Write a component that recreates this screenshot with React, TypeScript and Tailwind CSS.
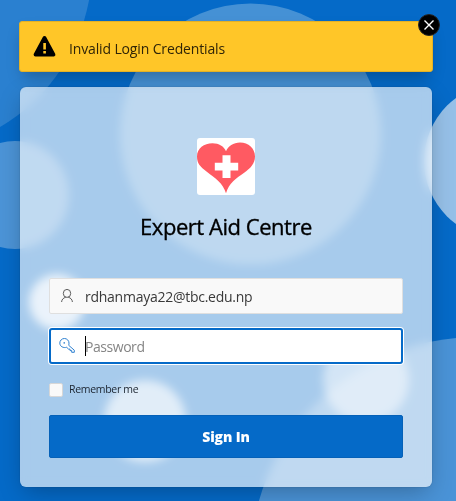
import React from "react";

function Backdrop() {
  return (
    <svg className="absolute inset-0" width="456" height="501" viewBox="0 0 456 501" fill="#fff" aria-hidden="true">
      <circle cx="-95.5" cy="-34.6" r="187.8" fillOpacity="0.15" />
      <circle cx="250.500" cy="134" r="130.500" fill="#f5fdf9" fillOpacity="0.27" />
      <circle cx="15" cy="195" r="54" fillOpacity="0.285" />
      <circle cx="502" cy="161" r="78" fillOpacity="0.58" />
      <circle cx="476" cy="563" r="225.8" fillOpacity="0.28" />
      <circle cx="57" cy="302" r="28" fillOpacity="0.76" />
      <circle cx="145" cy="421" r="41" fillOpacity="0.66" />
      <circle cx="366" cy="380" r="43" fillOpacity="0.5" />
    </svg>
  );
}

function WarningIcon() {
  return (
    <svg width="24" height="24" viewBox="0 0 24 24" aria-hidden="true">
      <path d="M11.500 3 20.500 19.600H2.500Z" stroke="#000" strokeWidth="3.8" strokeLinejoin="round" />
      <path d="M10.300 8h2.600v6.500h-2.600zM10.300 16h2.600v2.400h-2.600z" fill="#ffc628" />
    </svg>
  );
}

function HeartLogo() {
  return (
    <svg className="rounded-[3px] bg-white" width="58" height="57" viewBox="0 0 58 57" aria-hidden="true">
      <path
        d="M29 55.3C26 45 18 40 9.500 33.500C3.500 29 0 25.500 0 18.500C0 10.500 7 5.300 15.500 5.300C22 5.300 27 8.500 29 13.300C31 8.200 36.500 4.500 43 4.500C51.500 4.500 58 10.500 58 18.500C58 26 53 30.500 47.500 34.500C39 40.500 32 45 29 55.300Z"
        fill="#ff5a62"
      />
      <path d="M25.500 17.300h8V24.700h7.700v7.800h-7.700v7.400h-8v-7.400H17.800v-7.800h7.700z" fill="#fff" />
    </svg>
  );
}

function UserIcon() {
  return (
    <svg width="16" height="16" viewBox="0 0 16 16" fill="none" stroke="#5c5c5c" aria-hidden="true">
      <ellipse cx="8" cy="5.400" rx="3.700" ry="4" />
      <path d="M2.600 14C2.800 11.400 4.200 10 6.800 9.200M9.200 9.200C11.800 10 13.200 11.400 13.400 14" />
    </svg>
  );
}

function KeyIcon() {
  return (
    <svg width="16" height="16" viewBox="0 0 16 16" fill="none" stroke="#2f80d0" strokeLinejoin="round" aria-hidden="true">
      <path d="M9.700 7.300 15.300 12.200V14.300H12.700V12.600H11V11.100H9.500L7.700 9.300C4.500 10.300 .8 8.500 .8 5.100A4.600 4.600 0 0 1 10 5.100C10 5.900 9.900 6.700 9.700 7.300Z" />
      <circle cx="5.200" cy="4.900" r=".8" fill="#2f80d0" stroke="none" />
    </svg>
  );
}

export default function App() {
  return (
    <div className="relative h-[501px] w-[456px] overflow-hidden bg-[#056ac8] font-['Open_Sans','Noto_Sans',sans-serif] text-black">
      <Backdrop />
      <main className="relative flex flex-col pl-5 pt-[21px]">
        <div
          role="alert"
          className="relative z-10 -ml-px flex h-[51px] w-[414px] items-center rounded-[3px] border border-[#e5b124] bg-[#ffc628] pl-[13px] shadow-[0_8px_16px_-4px_rgba(0,0,0,0.28)]"
        >
          <WarningIcon />
          <span className="ml-[12px] mt-[3px] whitespace-nowrap text-[14px] tracking-[-0.14px] text-[#302507]">Invalid Login Credentials</span>
          <button
            aria-label="Close"
            className="absolute -right-[8px] -top-[8px] flex size-[22px] items-center justify-center rounded-full border border-[#252525] bg-black"
          >
            <svg width="12" height="12" viewBox="0 0 12 12" stroke="#fff" strokeWidth="1.4" aria-hidden="true">
              <path d="m1.500 1.500 9 9m0-9-9 9" />
            </svg>
          </button>
        </div>

        <form
          onSubmit={(e) => e.preventDefault()}
          className="mt-[15px] flex h-[400px] w-[412px] flex-col items-center rounded-md bg-white/65 px-[29px] pt-[51px] shadow-[0_8px_24px_-4px_rgba(0,0,0,0.28),0_0_2px_rgba(0,0,0,0.2)] backdrop-blur-[5px]"
        >
          <HeartLogo />
          <h1 className="mt-[15px] whitespace-nowrap text-[22px] font-normal leading-8 tracking-[-0.46px] [-webkit-text-stroke:0.35px_black]">Expert Aid Centre</h1>

          <div className="mt-[36px] flex h-9 w-[354px] shrink-0 items-center rounded-[2px] border border-[#dfdfdf] bg-[#f9f9f9] pl-[9px]">
            <UserIcon />
            <span className="ml-[10px] text-[14px] tracking-[-0.26px] text-[#393939]">rdhanmaya22@tbc.edu.np</span>
          </div>

          <div className="mt-[14px] flex h-9 w-[354px] shrink-0 items-center rounded-[3px] border-2 border-[#056ac8] bg-white pl-2 shadow-[0_0_0_1px_#fff]">
            <KeyIcon />
            <span className="ml-[10px] flex h-5 items-center border-l border-black text-[14px] tracking-[-0.45px] text-[#858585]">
              <span className="-ml-px mt-px">Password</span>
            </span>
          </div>

          <label className="mt-[18px] flex h-[15px] w-full items-center">
            <span className="size-[14px] rounded-[2px] border border-[#d7d7d7] bg-[#f9f9f9]" />
            <span className="ml-[6px] whitespace-nowrap text-[10.5px] tracking-[-0.3px] text-[#1c2530]">Remember me</span>
          </label>

          <button className="mt-[18px] h-[43px] w-full rounded-[2px] border border-[#0561b8] bg-[#056ac8] text-[14px] font-extrabold tracking-[-0.1px] text-white">
            Sign In
          </button>
        </form>
      </main>
    </div>
  );
}
